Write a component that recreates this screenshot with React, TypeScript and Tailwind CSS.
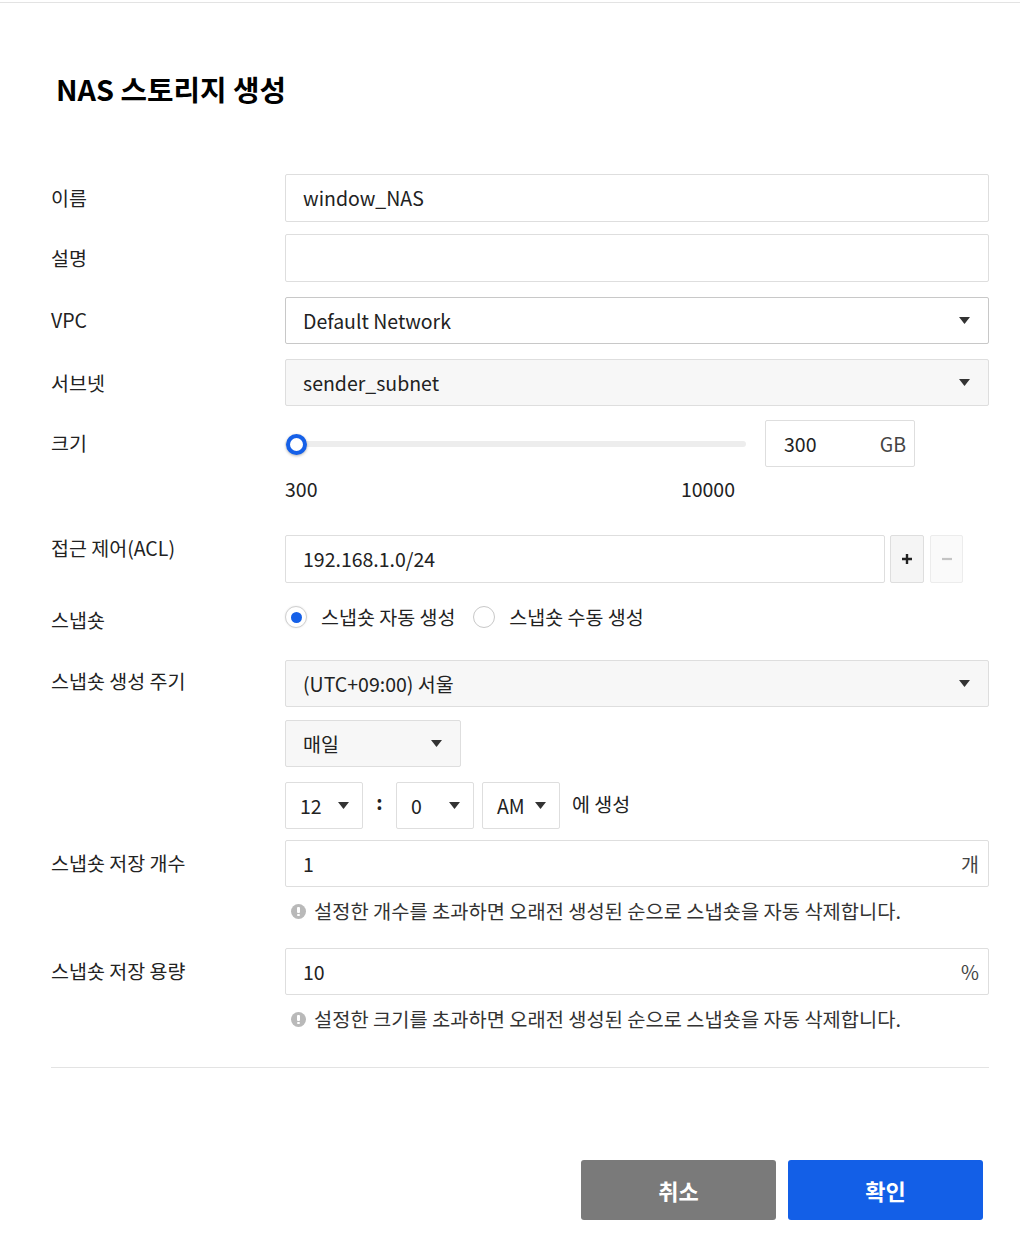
import React from "react";

const FONT = "font-['Noto_Sans_CJK_KR','Noto_Sans',sans-serif]";

function Caret() {
  return (
    <svg width="11" height="7" viewBox="0 0 11 7" className="shrink-0">
      <path d="M0 0 L11 0 L5.5 7 Z" fill="#333" />
    </svg>
  );
}

function Hint({ text }: { text: string }) {
  return (
    <div className="flex items-center gap-[8px] pl-[6px] mt-[12px] text-[19.8px] text-[#333]">
      <span className="relative w-[15px] h-[15px] rounded-full bg-[#b9b9b9] shrink-0">
        <span className="absolute left-[6px] top-[3px] w-[3px] h-[6px] bg-white rounded-[1px]" />
        <span className="absolute left-[6px] top-[10px] w-[3px] h-[2px] bg-white rounded-[1px]" />
      </span>
      <span className="leading-[24px]">{text}</span>
    </div>
  );
}

function Label({ children, className = "" }: { children: React.ReactNode; className?: string }) {
  return (
    <div className={`w-[234px] shrink-0 text-[19.5px] text-[#222] leading-[24px] ${className}`}>
      {children}
    </div>
  );
}

function Select({
  value,
  className = "",
  gray = false,
  dark = false,
}: {
  value: string;
  className?: string;
  gray?: boolean;
  dark?: boolean;
}) {
  return (
    <div
      className={`h-[47px] flex items-center justify-between pl-[17px] pr-[18px] rounded-[2px] border text-[19.5px] text-[#222] ${
        dark ? "border-[#c8c8c8]" : "border-[#dedede]"
      } ${gray ? "bg-[#f7f7f7]" : "bg-white"} ${className}`}
    >
      <span>{value}</span>
      <Caret />
    </div>
  );
}

function SmallSelect({ value, className = "" }: { value: string; className?: string }) {
  return (
    <div
      className={`w-[78px] h-[47px] border border-[#dedede] rounded-[2px] flex items-center justify-between pl-[14px] pr-[13px] ${className}`}
    >
      <span>{value}</span>
      <Caret />
    </div>
  );
}

export default function App() {
  return (
    <div className={`${FONT} w-[1020px] h-[1256px] bg-white relative`}>
      <div className="h-[2px]" />
      <div className="h-[1px] bg-[#e3e3e3]" />

      <div className="pl-[51px] pr-[31px]">
        <h1 className="mt-[66px] ml-[5px] text-[28.8px] font-bold text-black leading-[40px]">
          NAS 스토리지 생성
        </h1>

        {/* 이름 */}
        <div className="mt-[65px] flex items-center">
          <Label>이름</Label>
          <div className="flex-1 h-[48px] border border-[#dedede] rounded-[2px] flex items-center px-[17px] text-[19.5px] text-[#222]">
            window_NAS
          </div>
        </div>

        {/* 설명 */}
        <div className="mt-[12px] flex items-center">
          <Label>설명</Label>
          <div className="flex-1 h-[48px] border border-[#dedede] rounded-[2px]" />
        </div>

        {/* VPC */}
        <div className="mt-[15px] flex items-center">
          <Label className="-mt-[2px]">VPC</Label>
          <Select value="Default Network" dark className="flex-1" />
        </div>

        {/* 서브넷 */}
        <div className="mt-[15px] flex items-center">
          <Label>서브넷</Label>
          <Select value="sender_subnet" gray className="flex-1" />
        </div>

        {/* 크기 */}
        <div className="mt-[14px] flex items-start">
          <Label className="mt-[11px]">크기</Label>
          <div className="flex-1">
            <div className="flex items-center">
              <div className="w-[461px] relative h-[47px] flex items-center">
                <div className="w-full h-[6px] rounded-full bg-[#ededed]" />
                <span className="absolute left-[1px] top-[14px] w-[21px] h-[21px] rounded-full border-[4px] border-[#1560e8] bg-white shadow-[0_1px_3px_rgba(0,0,0,0.3)]" />
              </div>
              <div className="ml-[19px] w-[150px] h-[47px] border border-[#dedede] rounded-[2px] flex items-center justify-between pl-[18px] pr-[8px] text-[19.5px] text-[#222]">
                <span>300</span>
                <span className="text-[#444]">GB</span>
              </div>
            </div>
            <div className="w-[450px] flex justify-between mt-[9px] text-[19.5px] text-[#222] leading-[26px]">
              <span>300</span>
              <span>10000</span>
            </div>
          </div>
        </div>

        {/* ACL */}
        <div className="mt-[33px] flex items-start">
          <Label className="mt-[1px]">접근 제어(ACL)</Label>
          <div className="flex-1 flex items-center">
            <div className="w-[600px] h-[48px] border border-[#dedede] rounded-[2px] flex items-center px-[17px] text-[19.5px] text-[#222]">
              192.168.1.0/24
            </div>
            <div className="ml-[5px] w-[34px] h-[48px] border border-[#dedede] bg-[#f5f5f5] rounded-[2px] flex items-center justify-center">
              <svg width="12" height="12" viewBox="0 0 12 12">
                <path d="M6 1 V11 M1 6 H11" stroke="#222" strokeWidth="2.4" />
              </svg>
            </div>
            <div className="ml-[6px] w-[33px] h-[48px] border border-[#ececec] bg-[#fafafa] rounded-[2px] flex items-center justify-center">
              <svg width="12" height="12" viewBox="0 0 12 12">
                <path d="M1 6 H11" stroke="#c4c4c4" strokeWidth="2.2" />
              </svg>
            </div>
          </div>
        </div>

        {/* 스냅숏 */}
        <div className="mt-[19px] flex items-center">
          <Label className="mt-[6px]">스냅숏</Label>
          <div className="flex-1 flex items-center text-[19.5px] leading-[26px] text-[#222]">
            <span className="w-[22px] h-[22px] rounded-full border border-[#d0d0d0] bg-white flex items-center justify-center shadow-[0_0_2px_rgba(0,0,0,0.1)]">
              <span className="w-[11px] h-[11px] rounded-full bg-[#1560e8]" />
            </span>
            <span className="ml-[14px]">스냅숏 자동 생성</span>
            <span className="ml-[18px] w-[22px] h-[22px] rounded-full border border-[#c8c8c8] bg-white" />
            <span className="ml-[14px]">스냅숏 수동 생성</span>
          </div>
        </div>

        {/* 스냅숏 생성 주기 */}
        <div className="mt-[28px] flex items-start">
          <Label className="mt-[9px]">스냅숏 생성 주기</Label>
          <div className="flex-1">
            <Select value="(UTC+09:00) 서울" gray />
            <Select value="매일" gray className="mt-[13px] w-[176px]" />
            <div className="mt-[15px] flex items-center text-[19.5px] text-[#222]">
              <SmallSelect value="12" />
              <span className="w-[33px] text-center -mt-[8px] font-bold">:</span>
              <SmallSelect value="0" />
              <SmallSelect value="AM" className="ml-[8px] pl-[13px]" />
              <span className="ml-[12px] -mt-[3px]">에 생성</span>
            </div>
          </div>
        </div>

        {/* 스냅숏 저장 개수 */}
        <div className="mt-[11px] flex items-start">
          <Label className="mt-[11px]">스냅숏 저장 개수</Label>
          <div className="flex-1">
            <div className="h-[47px] border border-[#dedede] rounded-[2px] flex items-center justify-between pl-[17px] pr-[9px] text-[19.5px] text-[#222]">
              <span>1</span>
              <span className="text-[#444]">개</span>
            </div>
            <Hint text="설정한 개수를 초과하면 오래전 생성된 순으로 스냅숏을 자동 삭제합니다." />
          </div>
        </div>

        {/* 스냅숏 저장 용량 */}
        <div className="mt-[25px] flex items-start">
          <Label className="mt-[11px]">스냅숏 저장 용량</Label>
          <div className="flex-1">
            <div className="h-[47px] border border-[#dedede] rounded-[2px] flex items-center justify-between pl-[17px] pr-[9px] text-[19.5px] text-[#222]">
              <span>10</span>
              <span className="text-[#444]">%</span>
            </div>
            <Hint text="설정한 크기를 초과하면 오래전 생성된 순으로 스냅숏을 자동 삭제합니다." />
          </div>
        </div>

        <div className="mt-[36px] h-[1px] bg-[#e3e3e3]" />

        <div className="mt-[92px] flex justify-end gap-[12px] pr-[6px]">
          <button className="w-[195px] h-[60px] rounded-[3px] bg-[#7a7a7a] text-white text-[22px] font-bold">
            취소
          </button>
          <button className="w-[195px] h-[60px] rounded-[3px] bg-[#135fe7] text-white text-[22px] font-bold">
            확인
          </button>
        </div>
      </div>
    </div>
  );
}
